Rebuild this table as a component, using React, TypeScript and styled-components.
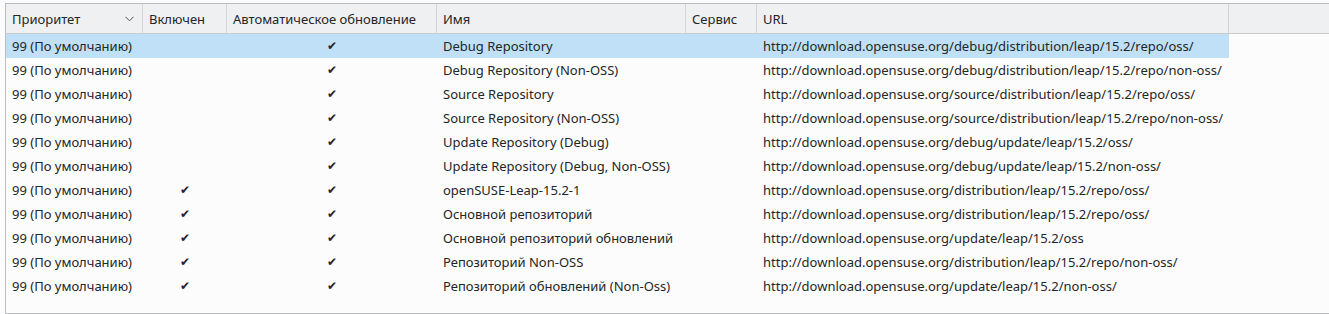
import styled, { createGlobalStyle } from "styled-components"

const GlobalStyle = createGlobalStyle`
  html, body {
    margin: 0;
    padding: 0;
    background: #fcfcfc;
    overflow: hidden;
  }
  body {
    font-family: "Noto Sans", "DejaVu Sans", sans-serif;
    font-size: 13px;
    color: #232627;
  }
`

const COLUMNS = "137px 84px 210px 249px 71px 472px"

const Page = styled.div`
  width: 1329px;
  height: 314px;
  padding: 3px 0 0 5px;
  box-sizing: border-box;
`

const Frame = styled.div`
  width: 1340px;
  height: 311px;
  box-sizing: border-box;
  border: 1px solid #bcbebf;
  background: #fcfcfc;
`

const HeaderRow = styled.div`
  display: grid;
  grid-template-columns: ${COLUMNS} 1fr;
  height: 29px;
  background: #eff0f1;
  border-bottom: 1px solid #c9cbcd;
`

const HeaderCell = styled.div`
  display: flex;
  align-items: center;
  padding-left: 6px;
  padding-right: 8px;
  border-right: 1px solid #d3d5d6;
  white-space: nowrap;
  overflow: hidden;
`

const SortArrow = styled.svg`
  margin-left: auto;
  flex: none;
`

const Body = styled.div`
  display: flex;
  flex-direction: column;
`

const Row = styled.div<{ $selected?: boolean }>`
  display: grid;
  grid-template-columns: ${COLUMNS};
  width: 1223px;
  height: 24px;
  background: ${(p) => (p.$selected ? "#bfe0f6" : "transparent")};
`

const Cell = styled.div<{ $center?: boolean }>`
  display: flex;
  align-items: center;
  justify-content: ${(p) => (p.$center ? "center" : "flex-start")};
  padding-left: ${(p) => (p.$center ? "0" : "6px")};
  white-space: nowrap;
`

const Check = styled.span`
  font-family: "DejaVu Sans", sans-serif;
  font-size: 12px;
  line-height: 1;
`

type Repo = {
  enabled: boolean
  name: string
  url: string
}

const repos: Repo[] = [
  { enabled: false, name: "Debug Repository", url: "http://download.opensuse.org/debug/distribution/leap/15.2/repo/oss/" },
  { enabled: false, name: "Debug Repository (Non-OSS)", url: "http://download.opensuse.org/debug/distribution/leap/15.2/repo/non-oss/" },
  { enabled: false, name: "Source Repository", url: "http://download.opensuse.org/source/distribution/leap/15.2/repo/oss/" },
  { enabled: false, name: "Source Repository (Non-OSS)", url: "http://download.opensuse.org/source/distribution/leap/15.2/repo/non-oss/" },
  { enabled: false, name: "Update Repository (Debug)", url: "http://download.opensuse.org/debug/update/leap/15.2/oss/" },
  { enabled: false, name: "Update Repository (Debug, Non-OSS)", url: "http://download.opensuse.org/debug/update/leap/15.2/non-oss/" },
  { enabled: true, name: "openSUSE-Leap-15.2-1", url: "http://download.opensuse.org/distribution/leap/15.2/repo/oss/" },
  { enabled: true, name: "Основной репозиторий", url: "http://download.opensuse.org/distribution/leap/15.2/repo/oss/" },
  { enabled: true, name: "Основной репозиторий обновлений", url: "http://download.opensuse.org/update/leap/15.2/oss" },
  { enabled: true, name: "Репозиторий Non-OSS", url: "http://download.opensuse.org/distribution/leap/15.2/repo/non-oss/" },
  { enabled: true, name: "Репозиторий обновлений (Non-Oss)", url: "http://download.opensuse.org/update/leap/15.2/non-oss/" },
]

export default function App() {
  return (
    <Page>
      <GlobalStyle />
      <Frame>
        <HeaderRow>
          <HeaderCell>
            Приоритет
            <SortArrow width="9" height="6" viewBox="0 0 9 6">
              <path d="M0.5 0.8 L4.5 4.8 L8.5 0.8" fill="none" stroke="#4d4f51" strokeWidth="1" />
            </SortArrow>
          </HeaderCell>
          <HeaderCell>Включен</HeaderCell>
          <HeaderCell>Автоматическое обновление</HeaderCell>
          <HeaderCell>Имя</HeaderCell>
          <HeaderCell>Сервис</HeaderCell>
          <HeaderCell>URL</HeaderCell>
          <HeaderCell />
        </HeaderRow>
        <Body>
          {repos.map((r, i) => (
            <Row key={i} $selected={i === 0}>
              <Cell>99 (По умолчанию)</Cell>
              <Cell $center>{r.enabled && <Check>✔</Check>}</Cell>
              <Cell $center>
                <Check>✔</Check>
              </Cell>
              <Cell>{r.name}</Cell>
              <Cell />
              <Cell>{r.url}</Cell>
            </Row>
          ))}
        </Body>
      </Frame>
    </Page>
  )
}
